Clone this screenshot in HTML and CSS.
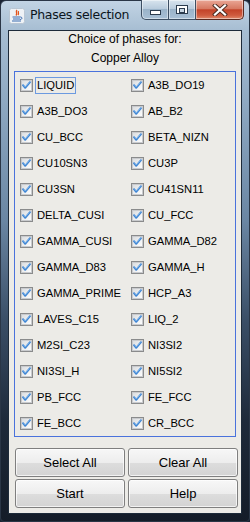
FILE: index.html
```html
<!DOCTYPE html>
<html>
<head>
<meta charset="utf-8">
<link rel="stylesheet" href="styles.css">
</head>
<body>
<svg class="defs" width="0" height="0">
  <defs>
    <linearGradient id="cbg" x1="0" y1="0" x2="1" y2="1">
      <stop offset="0" stop-color="#d9dcdf"/>
      <stop offset="1" stop-color="#ffffff"/>
    </linearGradient>
    <symbol id="cb" viewBox="0 0 13 13">
      <rect x="0.5" y="0.5" width="12" height="12" fill="#f5f5f5" stroke="#8a8b8c"/>
      <rect x="1.5" y="1.5" width="10" height="10" fill="url(#cbg)" stroke="#c9cbce"/>
      <path d="M3 6.2 L5.2 8.8 L10 3.2" fill="none" stroke="#3f86d4" stroke-width="1.9" stroke-linecap="round" stroke-linejoin="round"/>
      <path d="M3.6 6.2 L5.2 8 L9.4 3.4" fill="none" stroke="#8fc0ef" stroke-width="0.7"/>
    </symbol>
  </defs>
</svg>
<div class="window">
  <div class="titlebar">
    <svg class="appicon" width="16" height="16" viewBox="0 0 16 16">
      <rect x="0.5" y="0.5" width="15" height="15" rx="2" fill="#eef2f6" stroke="#b9c6d3"/>
      <path d="M8 2 C6 4 9 5 7 7.5 M9.5 3 C8.5 4.5 10.5 5 9 7" fill="none" stroke="#e2541b" stroke-width="1.3"/>
      <path d="M3.5 9 H11.5 M4 11 H11 M3 13 H12" stroke="#3b6cb0" stroke-width="1"/>
      <path d="M11.5 9 C13.5 9 13.5 11.5 11 11.5" fill="none" stroke="#3b6cb0" stroke-width="1"/>
    </svg>
    <span class="title">Phases selection</span>
    <div class="controls">
      <span class="ctl min"><span class="glyph-min"></span></span>
      <span class="ctl max"><span class="glyph-max"></span></span>
      <span class="ctl close"><svg width="16" height="12" viewBox="0 0 16 12"><path d="M3 1.5 L13 10.5 M13 1.5 L3 10.5" stroke="#4a2a20" stroke-width="4" stroke-linecap="square"/><path d="M3 1.5 L13 10.5 M13 1.5 L3 10.5" stroke="#ffffff" stroke-width="2.2" stroke-linecap="square"/></svg></span>
    </div>
  </div>
  <div class="client">
    <div class="header">
      <div>Choice of phases for:</div>
      <div>Copper Alloy</div>
    </div>
    <div class="panel">
      <div class="item"><svg class="cb"><use href="#cb"/></svg><span class="lbl focus">LIQUID</span></div>
      <div class="item"><svg class="cb"><use href="#cb"/></svg><span class="lbl">A3B_DO19</span></div>
      <div class="item"><svg class="cb"><use href="#cb"/></svg><span class="lbl">A3B_DO3</span></div>
      <div class="item"><svg class="cb"><use href="#cb"/></svg><span class="lbl">AB_B2</span></div>
      <div class="item"><svg class="cb"><use href="#cb"/></svg><span class="lbl">CU_BCC</span></div>
      <div class="item"><svg class="cb"><use href="#cb"/></svg><span class="lbl">BETA_NIZN</span></div>
      <div class="item"><svg class="cb"><use href="#cb"/></svg><span class="lbl">CU10SN3</span></div>
      <div class="item"><svg class="cb"><use href="#cb"/></svg><span class="lbl">CU3P</span></div>
      <div class="item"><svg class="cb"><use href="#cb"/></svg><span class="lbl">CU3SN</span></div>
      <div class="item"><svg class="cb"><use href="#cb"/></svg><span class="lbl">CU41SN11</span></div>
      <div class="item"><svg class="cb"><use href="#cb"/></svg><span class="lbl">DELTA_CUSI</span></div>
      <div class="item"><svg class="cb"><use href="#cb"/></svg><span class="lbl">CU_FCC</span></div>
      <div class="item"><svg class="cb"><use href="#cb"/></svg><span class="lbl">GAMMA_CUSI</span></div>
      <div class="item"><svg class="cb"><use href="#cb"/></svg><span class="lbl">GAMMA_D82</span></div>
      <div class="item"><svg class="cb"><use href="#cb"/></svg><span class="lbl">GAMMA_D83</span></div>
      <div class="item"><svg class="cb"><use href="#cb"/></svg><span class="lbl">GAMMA_H</span></div>
      <div class="item"><svg class="cb"><use href="#cb"/></svg><span class="lbl">GAMMA_PRIME</span></div>
      <div class="item"><svg class="cb"><use href="#cb"/></svg><span class="lbl">HCP_A3</span></div>
      <div class="item"><svg class="cb"><use href="#cb"/></svg><span class="lbl">LAVES_C15</span></div>
      <div class="item"><svg class="cb"><use href="#cb"/></svg><span class="lbl">LIQ_2</span></div>
      <div class="item"><svg class="cb"><use href="#cb"/></svg><span class="lbl">M2SI_C23</span></div>
      <div class="item"><svg class="cb"><use href="#cb"/></svg><span class="lbl">NI3SI2</span></div>
      <div class="item"><svg class="cb"><use href="#cb"/></svg><span class="lbl">NI3SI_H</span></div>
      <div class="item"><svg class="cb"><use href="#cb"/></svg><span class="lbl">NI5SI2</span></div>
      <div class="item"><svg class="cb"><use href="#cb"/></svg><span class="lbl">PB_FCC</span></div>
      <div class="item"><svg class="cb"><use href="#cb"/></svg><span class="lbl">FE_FCC</span></div>
      <div class="item"><svg class="cb"><use href="#cb"/></svg><span class="lbl">FE_BCC</span></div>
      <div class="item"><svg class="cb"><use href="#cb"/></svg><span class="lbl">CR_BCC</span></div>
    </div>
    <div class="buttons">
      <button class="btn">Select All</button>
      <button class="btn">Clear All</button>
      <button class="btn">Start</button>
      <button class="btn">Help</button>
    </div>
  </div>
</div>
</body>
</html>
```
FILE: styles.css
```css
html, body {
  margin: 0;
  padding: 0;
  width: 250px;
  height: 522px;
  overflow: hidden;
  background: #1a2433;
}
.defs {
  position: absolute;
  width: 0;
  height: 0;
}
.window {
  box-sizing: border-box;
  width: 250px;
  height: 522px;
  padding: 0 7px 7px;
  border-radius: 6px 6px 4px 4px;
  border: 1px solid #2a3646;
  background: linear-gradient(to bottom, #c2d4e4 0, #a6bdd2 30px, #88a3bd 120px, #6a86a3 220px, #3a4e66 320px, #1e2a3a 420px, #141c28 522px);
  display: flex;
  flex-direction: column;
  font-family: "Liberation Sans", Arial, sans-serif;
}
.titlebar {
  height: 29px;
  display: flex;
  align-items: flex-start;
}
.appicon {
  margin: 7px 0 0 1px;
  flex: none;
}
.title {
  margin: 6px 0 0 5px;
  font-family: "DejaVu Sans", "Liberation Sans", sans-serif;
  font-size: 12.5px;
  line-height: 16px;
  color: #0b1520;
  letter-spacing: -0.3px;
}
.controls {
  margin-left: auto;
  margin-right: -2px;
  margin-top: -1px;
  display: flex;
  height: 20px;
}
.ctl {
  box-sizing: border-box;
  height: 20px;
  display: flex;
  align-items: center;
  justify-content: center;
  border: 1px solid #3d4f63;
  border-top: none;
  background: linear-gradient(to bottom, #d8e4ee 0, #b9ccdd 45%, #9ab3c9 50%, #a8c0d6 100%);
  box-shadow: inset 0 0 0 1px rgba(255,255,255,0.45);
}
.min {
  width: 28px;
  border-radius: 0 0 0 5px;
}
.max {
  width: 27px;
  border-left: none;
}
.close {
  width: 48px;
  border-left: none;
  border-radius: 0 0 5px 0;
  background: linear-gradient(to bottom, #eaa796 0, #d77a63 45%, #c34329 52%, #cf5a3e 80%, #e08a6c 100%);
  border-color: #5a2a20;
}
.glyph-min {
  width: 9px;
  height: 3px;
  margin-top: 6px;
  background: #fff;
  border: 1px solid #2c3c4e;
}
.glyph-max {
  box-sizing: border-box;
  width: 12px;
  height: 9px;
  border: 1px solid #2c3c4e;
  background: #fff;
  box-shadow: inset 0 0 0 1px #fff;
}
.glyph-max::after {
  content: "";
  display: block;
  margin: 2px 2px 0;
  height: 3px;
  border: 1px solid #2c3c4e;
  background: #c9d7e3;
}
.client {
  flex: 1;
  border: 1px solid #1d2a39;
  background: #ecebe7;
  display: flex;
  flex-direction: column;
  font-size: 11px;
  color: #000;
}
.header {
  display: flex;
  flex-direction: column;
  align-items: center;
  gap: 3px;
  line-height: 16px;
  font-size: 12px;
}
.panel {
  margin: 5px 5px 0;
  border: 1px solid #4a72dc;
  display: grid;
  grid-template-columns: 111px 111px;
  grid-auto-rows: 26px;
}
.item {
  display: flex;
  align-items: center;
  padding-left: 5px;
  gap: 2px;
}
.cb {
  width: 13px;
  height: 13px;
  flex: none;
  margin-top: 1px;
}
.lbl {
  border: 1px solid transparent;
  padding: 1px 1px;
  line-height: 13px;
  font-size: 11.2px;
  white-space: nowrap;
}
.lbl.focus {
  border-color: #6c9ae0;
}
.buttons {
  margin: 11px 6px 0;
  display: grid;
  grid-template-columns: 110px 110px;
  column-gap: 3px;
  row-gap: 2px;
  grid-auto-rows: 29px;
}
.btn {
  font-family: "Liberation Sans", Arial, sans-serif;
  font-size: 13px;
  color: #000;
  border: 1px solid #7f7f7f;
  border-radius: 3px;
  background: linear-gradient(to bottom, #f7f7f7 0, #ededed 50%, #dddddd 51%, #d3d3d3 100%);
  box-shadow: inset 0 0 0 1px rgba(255,255,255,0.7);
  padding: 0;
  margin: 0;
}
```
